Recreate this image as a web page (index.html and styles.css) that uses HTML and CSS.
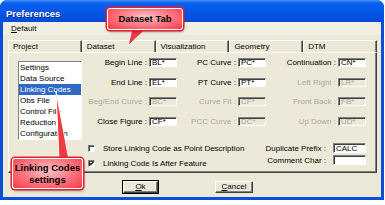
FILE: index.html
```html
<!DOCTYPE html>
<html lang="en">
<head>
    <meta charset="UTF-8">
    <title>Preferences</title>
    <link rel="stylesheet" href="styles.css">
</head>
<body>
    <div class="window">
        <div class="titlebar">Preferences</div>
        <div class="client">
            <div class="menubar"><span><u>D</u>efault</span></div>

            <div class="tabs">
                <div class="tab-row">
                    <div class="tab">Project</div>
                    <div class="tab active">Dataset</div>
                    <div class="tab">Visualization</div>
                    <div class="tab">Geometry</div>
                    <div class="tab">DTM</div>
                </div>
                <div class="pane">
                    <ul class="listbox">
                        <li>Settings</li>
                        <li>Data Source</li>
                        <li class="selected">Linking Codes</li>
                        <li>Obs File</li>
                        <li>Control File</li>
                        <li>Reduction</li>
                        <li>Configuration</li>
                    </ul>

                    <div class="settings">
                        <div class="codes">
                            <label>Begin Line :</label><input type="text" value="BL*">
                            <label>PC Curve :</label><input type="text" value="PC*">
                            <label>Continuation :</label><input type="text" value="CN*">

                            <label>End Line :</label><input type="text" value="EL*">
                            <label>PT Curve :</label><input type="text" value="PT*">
                            <label class="off">Left Right :</label><input type="text" value="LR*" disabled>

                            <label class="off">Beg/End Curve :</label><input type="text" value="BC*" disabled>
                            <label class="off">Curve Fit :</label><input type="text" value="CF*" disabled>
                            <label class="off">Front Back :</label><input type="text" value="FB*" disabled>

                            <label>Close Figure :</label><input type="text" value="CF*">
                            <label class="off">PCC Curve :</label><input type="text" value="DC*" disabled>
                            <label class="off">Up Down :</label><input type="text" value="UD*" disabled>
                        </div>

                        <div class="extras">
                            <div class="checks">
                                <div class="check-row"><span class="checkbox"></span>Store Linking Code as Point Description</div>
                                <div class="check-row">
                                    <span class="checkbox">
                                        <svg width="5" height="5" viewBox="0 0 5 5"><polyline points="0.5,2.2 1.8,3.6 4.5,0.8" fill="none" stroke="#000" stroke-width="1.2"/></svg>
                                    </span>Linking Code Is After Feature
                                </div>
                            </div>
                            <div class="prefix">
                                <label>Duplicate Prefix :</label><input type="text" value="CALC">
                                <label>Comment Char :</label><input type="text" value="">
                            </div>
                        </div>
                    </div>
                </div>
            </div>

            <div class="buttons">
                <button class="btn-ok"><u>O</u>k</button>
                <button class="btn-cancel"><u>C</u>ancel</button>
            </div>
        </div>

        <!-- callout pointers -->
        <svg class="tails" width="385" height="205">
            <polygon points="132,28 147,28 128,46" fill="#f03a46" stroke="#fff" stroke-width="1"/>
            <polygon points="59,160 69,160 56,91" fill="#f03a46" stroke="#fff" stroke-width="1"/>
        </svg>
        <div class="callout callout-tab">Dataset Tab</div>
        <div class="callout callout-list">Linking Codes<br>settings</div>
    </div>
</body>
</html>
```

FILE: styles.css
```css
* {
    box-sizing: border-box;
}

body {
    margin: 0;
    background: #fff;
    font-family: "Liberation Sans", Arial, sans-serif;
    font-size: 8px;
    color: #000;
}

.window {
    position: relative;
    width: 384px;
    height: 200px;
    display: flex;
    flex-direction: column;
    padding: 0 3px 3px;
    background: #0a4fd8;
    border-radius: 7px 7px 0 0;
}

.titlebar {
    height: 22px;
    margin: 0 -3px;
    padding: 8px 0 0 6px;
    border-radius: 7px 7px 0 0;
    background: linear-gradient(#4593fb, #0a61ee 14%, #0556e8 55%, #034bd6);
    color: #fff;
    font-size: 9.5px;
    font-weight: bold;
    line-height: 11px;
    text-shadow: 1px 1px #0b2a96;
}

.client {
    flex: 1;
    display: flex;
    flex-direction: column;
    background: #ece9d8;
}

.menubar {
    height: 13px;
    padding-left: 8px;
    line-height: 13px;
    background: #f1efe3;
}

.tabs {
    width: 369px;
    margin: 5px 0 0 5px;
}

.tab-row {
    display: flex;
    height: 12px;
}

.tab {
    flex: 1;
    padding-left: 4px;
    line-height: 11px;
    border-top: 1px solid #fff;
    border-left: 1px solid #fff;
    border-right: 1px solid #404040;
    box-shadow: inset -1px 0 #808080;
    white-space: nowrap;
}

.pane {
    display: flex;
    height: 121px;
    padding: 5px 0 0 9px;
    border: 1px solid;
    border-color: #fff #404040 #404040 #fff;
    box-shadow: inset -1px -1px #808080;
}

.listbox {
    width: 64px;
    height: 79px;
    margin: 3px 0 0;
    padding: 0;
    list-style: none;
    background: #fff;
    border: 1px solid;
    border-color: #808080 #fff #fff #808080;
    overflow: hidden;
}

.listbox li {
    height: 11px;
    padding-left: 1px;
    line-height: 11px;
    white-space: nowrap;
    overflow: hidden;
}

.listbox li.selected {
    background: #316ac5;
    color: #fff;
}

.settings {
    width: 278px;
    margin-left: 6px;
}

.codes {
    display: grid;
    grid-template-columns: 61px 28px 61px 28px 72px 28px;
    grid-auto-rows: 9px;
    row-gap: 10.5px;
    align-items: center;
}

.codes label {
    padding-right: 2px;
    text-align: right;
    white-space: nowrap;
}

label.off {
    color: #aca899;
}

input {
    height: 9px;
    width: 100%;
    padding: 0 0 0 2px;
    font: inherit;
    line-height: 7px;
    color: #000;
    background: #fff;
    border: 1px solid;
    border-color: #808080 #fff #fff #808080;
    box-shadow: inset 1px 1px #404040;
    outline: none;
}

input:disabled {
    background: #ece9d8;
    color: #aca899;
}

.extras {
    display: flex;
    justify-content: space-between;
    margin-top: 17.5px;
}

.checks {
    display: flex;
    flex-direction: column;
    gap: 7px;
    padding-top: 1px;
}

.check-row {
    display: flex;
    align-items: center;
    height: 8px;
    white-space: nowrap;
}

.checkbox {
    display: flex;
    align-items: center;
    justify-content: center;
    width: 7px;
    height: 7px;
    margin-right: 8px;
    background: #fff;
    border: 1px solid;
    border-color: #808080 #fff #fff #808080;
    box-shadow: inset 1px 1px #404040;
}

.prefix {
    display: grid;
    grid-template-columns: auto 33px;
    grid-auto-rows: 10px;
    column-gap: 7px;
    row-gap: 2px;
    align-items: center;
}

.prefix label {
    text-align: right;
    white-space: nowrap;
}

.prefix input {
    height: 10px;
}

.buttons {
    display: flex;
    gap: 57px;
    margin-top: 8px;
    padding-left: 120px;
}

.buttons button {
    height: 12px;
    padding: 0;
    font: inherit;
    line-height: 10px;
    background: #ece9d8;
    border: 1px solid;
    border-color: #fff #404040 #404040 #fff;
    box-shadow: inset -1px -1px #808080;
}

.btn-ok {
    width: 35px;
    outline: 1px solid #000;
}

.btn-cancel {
    width: 38px;
}

.tails {
    position: absolute;
    left: 0;
    top: 0;
    pointer-events: none;
}

.callout {
    position: absolute;
    border: 1px solid #fff;
    border-radius: 3px;
    box-shadow: 0 0 0 1.5px #e3202e, 1px 2px 3px rgba(0, 0, 0, 0.35);
    background: radial-gradient(ellipse at 50% 40%, #ffc4c8 0%, #ff7882 50%, #f03a46 100%);
    font-size: 9.5px;
    font-weight: bold;
    text-align: center;
    color: #000;
}

.callout-tab {
    left: 107px;
    top: 8px;
    width: 76px;
    height: 22px;
    line-height: 20px;
}

.callout-list {
    left: 12px;
    top: 158px;
    width: 71px;
    height: 31px;
    padding-top: 3px;
    line-height: 11.5px;
}
```
